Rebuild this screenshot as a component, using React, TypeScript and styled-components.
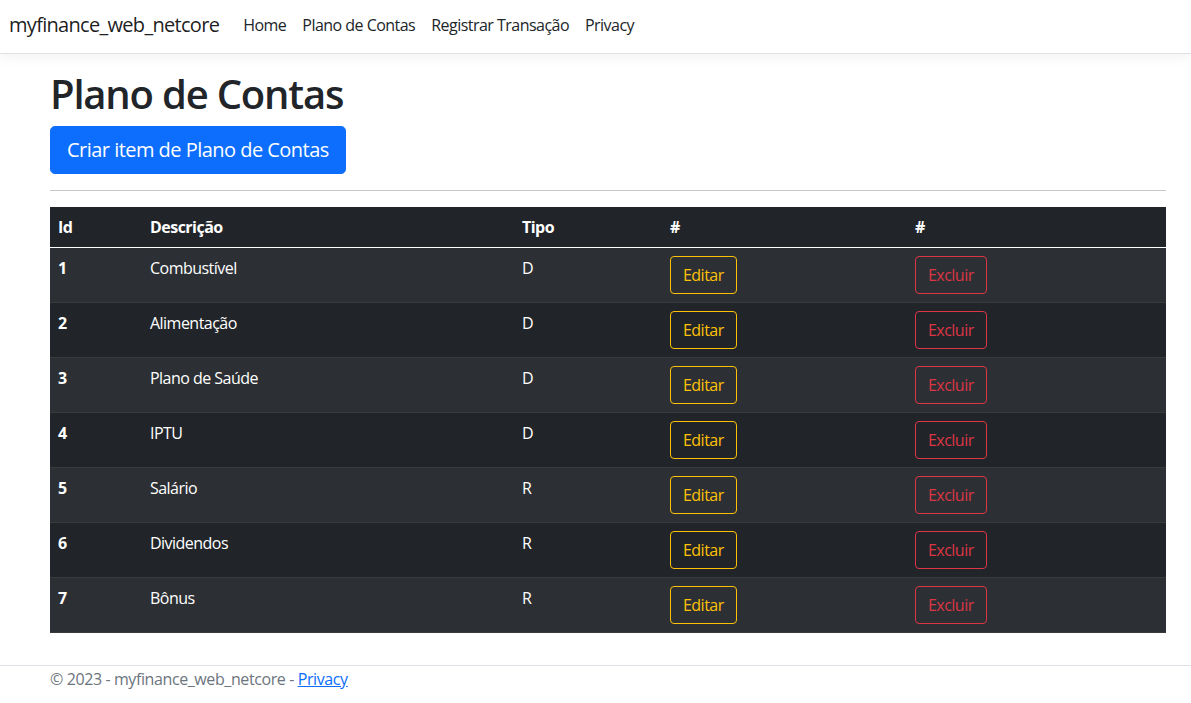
import styled, { createGlobalStyle } from 'styled-components'

const GlobalStyle = createGlobalStyle`
    * {
        box-sizing: border-box;
    }
    html, body {
        margin: 0;
        padding: 0;
        background: #fff;
    }
    body {
        font-family: 'Open Sans', 'Noto Sans', sans-serif;
        font-size: 16px;
        line-height: 1.5;
        letter-spacing: -0.033em;
        color: #212529;
    }
`

const Navbar = styled.header`
    height: 54px;
    display: flex;
    align-items: center;
    padding: 0 9px 3px;
    border-bottom: 1px solid #dee2e6;
    box-shadow: 0 4px 12px rgba(0, 0, 0, 0.05);
`
const Brand = styled.a`
    font-size: 20px;
    letter-spacing: -0.035em;
    color: rgba(0, 0, 0, 0.9);
    text-decoration: none;
    margin-right: 16px;
    line-height: 30px;
`
const NavList = styled.nav`
    display: flex;
`
const NavLink = styled.a`
    padding: 8px;
    color: #212529;
    text-decoration: none;
    font-size: 16px;
    line-height: 24px;
`
const Main = styled.main`
    padding: 16px 25px 16px 50px;
`
const Title = styled.h1`
    margin: 0 0 8px;
    font-size: 40px;
    font-weight: 600;
    letter-spacing: -0.03em;
    line-height: 1.2;
`
const Button = styled.button<{ $tone: 'primary' | 'warning' | 'danger'; $large?: boolean }>`
    font-family: inherit;
    letter-spacing: inherit;
    cursor: pointer;
    background: ${p => (p.$tone === 'primary' ? '#0d6efd' : 'transparent')};
    color: ${p =>
        p.$tone === 'primary' ? '#fff' : p.$tone === 'warning' ? '#ffc107' : '#dc3545'};
    border: 1px solid
        ${p =>
            p.$tone === 'primary' ? '#0d6efd' : p.$tone === 'warning' ? '#ffc107' : '#dc3545'};
    font-size: ${p => (p.$large ? '20px' : '16px')};
    line-height: 1.5;
    padding: ${p => (p.$large ? '8px 16px' : '6px 12px')};
    border-radius: ${p => (p.$large ? '4.8px' : '4px')};
`
const Rule = styled.hr`
    margin: 16px 0;
    border: 0;
    border-top: 1px solid #212529;
    opacity: 0.25;
`
const Table = styled.table`
    width: 100%;
    border-collapse: collapse;
    background: #212529;
    color: #fff;
    table-layout: fixed;
    margin-bottom: 16px;
`
const HeadCell = styled.th<{ $w: number }>`
    width: ${p => p.$w}px;
    text-align: left;
    font-weight: 700;
    padding: 8px;
    border-bottom: 1px solid #fff;
`
const Row = styled.tr<{ $odd: boolean }>`
    background: ${p => (p.$odd ? '#2c3034' : '#212529')};
    border-bottom: 1px solid #373b3e;
`
const Cell = styled.td<{ $bold?: boolean }>`
    padding: 8px;
    vertical-align: top;
    font-weight: ${p => (p.$bold ? 700 : 400)};
`
const Footer = styled.footer`
    border-top: 1px solid #dee2e6;
    padding: 0 0 0 50px;
    line-height: 27px;
    letter-spacing: -0.025em;
    color: #6c757d;
    white-space: nowrap;
`
const FooterLink = styled.a`
    color: #0d6efd;
    text-decoration: underline;
`

const contas = [
    { id: 1, descricao: 'Combustível', tipo: 'D' },
    { id: 2, descricao: 'Alimentação', tipo: 'D' },
    { id: 3, descricao: 'Plano de Saúde', tipo: 'D' },
    { id: 4, descricao: 'IPTU', tipo: 'D' },
    { id: 5, descricao: 'Salário', tipo: 'R' },
    { id: 6, descricao: 'Dividendos', tipo: 'R' },
    { id: 7, descricao: 'Bônus', tipo: 'R' }
]

function App () {
    return (
        <>
            <GlobalStyle />
            <Navbar>
                <Brand href='#'>myfinance_web_netcore</Brand>
                <NavList>
                    <NavLink href='#'>Home</NavLink>
                    <NavLink href='#'>Plano de Contas</NavLink>
                    <NavLink href='#'>Registrar Transação</NavLink>
                    <NavLink href='#'>Privacy</NavLink>
                </NavList>
            </Navbar>
            <Main>
                <Title>Plano de Contas</Title>
                <Button $tone='primary' $large>Criar item de Plano de Contas</Button>
                <Rule />
                <Table>
                    <thead>
                        <tr>
                            <HeadCell $w={92}>Id</HeadCell>
                            <HeadCell $w={372}>Descrição</HeadCell>
                            <HeadCell $w={148}>Tipo</HeadCell>
                            <HeadCell $w={245}>#</HeadCell>
                            <HeadCell $w={259}>#</HeadCell>
                        </tr>
                    </thead>
                    <tbody>
                        {contas.map((c, i) => (
                            <Row key={c.id} $odd={i % 2 === 0}>
                                <Cell $bold>{c.id}</Cell>
                                <Cell>{c.descricao}</Cell>
                                <Cell>{c.tipo}</Cell>
                                <Cell>
                                    <Button $tone='warning'>Editar</Button>
                                </Cell>
                                <Cell>
                                    <Button $tone='danger'>Excluir</Button>
                                </Cell>
                            </Row>
                        ))}
                    </tbody>
                </Table>
            </Main>
            <Footer>
                © 2023 - myfinance_web_netcore - <FooterLink href='#'>Privacy</FooterLink>
            </Footer>
        </>
    )
}

export default App
